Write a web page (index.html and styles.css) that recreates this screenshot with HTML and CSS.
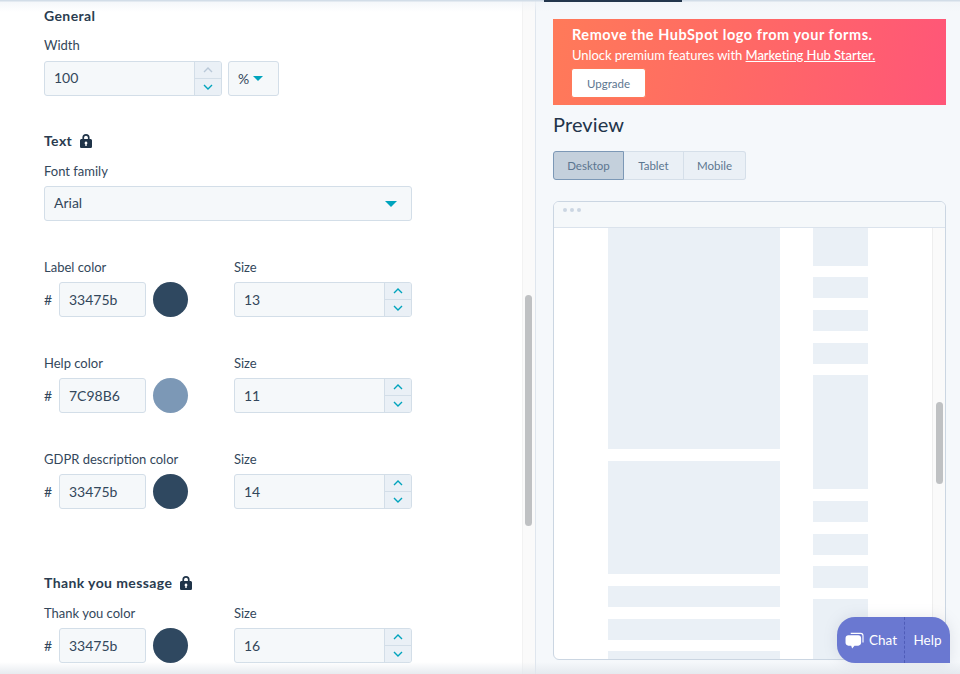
FILE: index.html
```html
<!DOCTYPE html>
<html lang="en">
<head>
  <meta charset="UTF-8" />
  <title>Form styling</title>
  <link rel="stylesheet" href="styles.css">
</head>
<body>

  <div class="page">

    <!-- settings column -->
    <div class="settings">
      <h3 class="heading">General</h3>
      <div class="label label-width">Width</div>
      <div class="row">
        <div class="field field-width">
          <span class="value value-up">100</span>
          <div class="stepper">
            <span class="step"><svg class="chev" viewBox="0 0 10 6"><path class="off" d="M1 5l4-4 4 4"/></svg></span>
            <span class="step"><svg class="chev" viewBox="0 0 10 6"><path d="M1 1l4 4 4-4"/></svg></span>
          </div>
        </div>
        <div class="field field-unit"><span class="unit">%</span><span class="caret caret-small"></span></div>
      </div>

      <h3 class="heading heading-text">Text
        <svg class="lock" viewBox="0 0 12 14"><path fill-rule="evenodd" d="M6 0a3.6 3.6 0 0 0-3.6 3.6V5H1.6C.7 5 0 5.7 0 6.6v5.8c0 .9.7 1.6 1.6 1.6h8.8c.9 0 1.6-.7 1.6-1.6V6.600c0-.9-.7-1.600-1.600-1.600H9.600V3.600A3.600 3.600 0 0 0 6 0zm0 1.700c1 0 1.900.8 1.900 1.900V5H4.100V3.600c0-1.100.9-1.900 1.900-1.900zM6 7.600a1.400 1.400 0 0 1 .7 2.600V12H5.300v-1.800A1.400 1.400 0 0 1 6 7.600z"/></svg>
      </h3>
      <div class="label">Font family</div>
      <div class="field field-select">
        <span class="value value-up">Arial</span><span class="caret"></span>
      </div>

      <div class="color-row">
        <div>
          <div class="label">Label color</div>
          <div class="row">
            <span class="hash">#</span>
            <div class="field field-hex"><span class="value">33475b</span></div>
            <span class="swatch swatch-dark"></span>
          </div>
        </div>
        <div>
          <div class="label">Size</div>
          <div class="field field-size">
            <span class="value">13</span>
            <div class="stepper">
              <span class="step"><svg class="chev" viewBox="0 0 10 6"><path d="M1 5l4-4 4 4"/></svg></span>
              <span class="step"><svg class="chev" viewBox="0 0 10 6"><path d="M1 1l4 4 4-4"/></svg></span>
            </div>
          </div>
        </div>
      </div>

      <div class="color-row">
        <div>
          <div class="label">Help color</div>
          <div class="row">
            <span class="hash">#</span>
            <div class="field field-hex"><span class="value">7C98B6</span></div>
            <span class="swatch swatch-light"></span>
          </div>
        </div>
        <div>
          <div class="label">Size</div>
          <div class="field field-size">
            <span class="value">11</span>
            <div class="stepper">
              <span class="step"><svg class="chev" viewBox="0 0 10 6"><path d="M1 5l4-4 4 4"/></svg></span>
              <span class="step"><svg class="chev" viewBox="0 0 10 6"><path d="M1 1l4 4 4-4"/></svg></span>
            </div>
          </div>
        </div>
      </div>

      <div class="color-row">
        <div>
          <div class="label">GDPR description color</div>
          <div class="row">
            <span class="hash">#</span>
            <div class="field field-hex"><span class="value">33475b</span></div>
            <span class="swatch swatch-dark"></span>
          </div>
        </div>
        <div>
          <div class="label">Size</div>
          <div class="field field-size">
            <span class="value">14</span>
            <div class="stepper">
              <span class="step"><svg class="chev" viewBox="0 0 10 6"><path d="M1 5l4-4 4 4"/></svg></span>
              <span class="step"><svg class="chev" viewBox="0 0 10 6"><path d="M1 1l4 4 4-4"/></svg></span>
            </div>
          </div>
        </div>
      </div>

      <h3 class="heading heading-thanks">Thank you message
        <svg class="lock" viewBox="0 0 12 14"><path fill-rule="evenodd" d="M6 0a3.6 3.6 0 0 0-3.6 3.6V5H1.6C.7 5 0 5.7 0 6.6v5.8c0 .9.7 1.6 1.6 1.6h8.8c.9 0 1.6-.7 1.6-1.6V6.600c0-.9-.7-1.600-1.600-1.600H9.600V3.600A3.600 3.600 0 0 0 6 0zm0 1.700c1 0 1.900.8 1.900 1.900V5H4.100V3.600c0-1.100.9-1.900 1.900-1.900zM6 7.600a1.400 1.400 0 0 1 .7 2.600V12H5.300v-1.800A1.400 1.400 0 0 1 6 7.600z"/></svg>
      </h3>
      <div class="color-row color-thanks">
        <div>
          <div class="label">Thank you color</div>
          <div class="row">
            <span class="hash">#</span>
            <div class="field field-hex"><span class="value">33475b</span></div>
            <span class="swatch swatch-dark"></span>
          </div>
        </div>
        <div>
          <div class="label">Size</div>
          <div class="field field-size">
            <span class="value">16</span>
            <div class="stepper">
              <span class="step"><svg class="chev" viewBox="0 0 10 6"><path d="M1 5l4-4 4 4"/></svg></span>
              <span class="step"><svg class="chev" viewBox="0 0 10 6"><path d="M1 1l4 4 4-4"/></svg></span>
            </div>
          </div>
        </div>
      </div>
    </div>

    <div class="track track-main"><span class="thumb thumb-main"></span></div>

    <!-- preview column -->
    <div class="side">
      <div class="active-tab"></div>

      <div class="banner">
        <div class="banner-title">Remove the HubSpot logo from your forms.</div>
        <div class="banner-text">Unlock premium features with <a href="#">Marketing Hub Starter.</a></div>
        <button class="upgrade">Upgrade</button>
      </div>

      <h2 class="preview-title">Preview</h2>

      <div class="devices">
        <button class="device device-on">Desktop</button>
        <button class="device device-tablet">Tablet</button>
        <button class="device device-mobile">Mobile</button>
      </div>

      <div class="frame">
        <div class="frame-bar"><i></i><i></i><i></i></div>
        <div class="frame-body">
          <div class="col col-main">
            <div class="ph ph-xl"></div>
            <div class="ph ph-lg"></div>
            <div class="ph"></div>
            <div class="ph"></div>
            <div class="ph"></div>
          </div>
          <div class="col col-side">
            <div class="ph ph-top"></div>
            <div class="ph"></div>
            <div class="ph"></div>
            <div class="ph"></div>
            <div class="ph ph-lg"></div>
            <div class="ph"></div>
            <div class="ph"></div>
            <div class="ph"></div>
            <div class="ph ph-lg"></div>
          </div>
          <div class="track track-frame"><span class="thumb thumb-frame"></span></div>
        </div>
      </div>
    </div>

  </div>

  <div class="fade-top"></div>
  <div class="fade-bottom"></div>

  <div class="chat">
    <span class="chat-part chat-left">
      <svg class="chat-icon" viewBox="0 0 20 18"><path class="back" d="M6 1.500h10.500c1.400 0 2.500 1.100 2.500 2.500v7"/><path d="M3.500 3.500h10.500c1.700 0 3 1.300 3 3v5c0 1.700-1.300 3-3 3H10l-2.500 3-1-3h-3c-1.700 0-3-1.300-3-3v-5c0-1.700 1.300-3 3-3z"/></svg>
      Chat
    </span>
    <span class="chat-part chat-right">Help</span>
  </div>

</body>
</html>
```

FILE: styles.css
```css
* { box-sizing: border-box; }
body { margin: 0; height: 674px; overflow: hidden; font-family: Lato, "Open Sans", sans-serif; color: #33475b; background: #fff; position: relative; }
button { font-family: inherit; cursor: pointer; }

.page { display: flex; height: 674px; }

/* settings column */
.settings { width: 522px; padding: 6px 0 0 44px; overflow: hidden; }
.heading { margin: 0 0 11px; height: 20px; font-size: 14px; line-height: 20px; font-weight: 700; letter-spacing: .4px; color: #2a3c50; display: flex; align-items: center; gap: 8px; }
.heading-text { margin-top: 35px; }
.heading-thanks { margin-top: 64px; }
.lock { width: 12px; height: 14px; fill: #1f3348; }
.label { height: 18px; margin-bottom: 6px; font-size: 13px; line-height: 18px; color: #33475b; }
.label-width { margin-top: -1px; margin-bottom: 7px; }
.row { display: flex; align-items: center; }

.field { height: 35px; display: flex; align-items: center; background: #f5f8fa; border: 1px solid #d3dee8; border-radius: 3px; font-size: 14px; color: #33475b; position: relative; }
.value { padding-left: 9px; }
.value-up { padding-bottom: 2px; }
.field-width { width: 178px; margin-right: 6px; }
.field-unit { width: 51px; padding-left: 9px; gap: 4px; }
.unit { font-size: 14px; }
.field-select { width: 368px; padding-right: 14px; justify-content: space-between; }
.field-hex { width: 87px; }
.field-size { width: 178px; }
.caret { width: 0; height: 0; border-left: 6px solid transparent; border-right: 6px solid transparent; border-top: 6px solid #00a4bd; }
.caret-small { border-left-width: 5.500px; border-right-width: 5.500px; border-top-width: 5px; }

.stepper { position: absolute; top: 0; right: 0; bottom: 0; width: 27px; display: flex; flex-direction: column; background: #eaf0f6; border-left: 1px solid #d3dee8; border-radius: 0 2px 2px 0; }
.step { flex: 1; display: flex; align-items: center; justify-content: center; }
.step + .step { border-top: 1px solid #d3dee8; }
.chev { width: 10px; height: 6px; fill: none; stroke: #00a4bd; stroke-width: 1.400; }
.chev .off { stroke: #b9c8d8; }

.color-row { display: flex; gap: 46px; margin-top: 37px; }
.color-thanks { margin-top: 11px; }
.color-row > div:first-child { width: 144px; }
.hash { width: 15px; font-size: 14px; }
.swatch { width: 35px; height: 35px; margin-left: 7px; border-radius: 50%; }
.swatch-dark { background: #2f4860; }
.swatch-light { background: #7c98b6; }

/* scrollbars */
.track { background: #fafafa; display: block; }
.track-main { width: 14px; padding: 295px 0 0 2px; border-left: 1px solid #f2f2f2; border-right: 1px solid #dfe6ee; }
.thumb { display: block; width: 7px; background: #bfc1c3; border-radius: 4px; }
.thumb-main { height: 231px; }

/* preview column */
.side { flex: 1; background: #f5f8fb; padding-left: 17px; }
.active-tab { width: 138px; height: 2px; margin-left: -9px; background: #22364c; position: relative; z-index: 1; }

.banner { width: 393px; height: 86px; margin-top: 17px; padding: 6px 0 0 19px; color: #fff; background: linear-gradient(100deg, #ff7a59 0%, #ff6a64 45%, #ff5678 100%); }
.banner-title { height: 20px; font-size: 14.500px; line-height: 20px; font-weight: 700; letter-spacing: .53px; }
.banner-text { height: 20px; font-size: 13px; line-height: 20px; letter-spacing: -.05px; }
.banner-text a { color: #fff; font-weight: 500; }
.upgrade { display: block; width: 75px; height: 30px; margin: 3px 0 0 -1px; background: #fff; border: 1px solid #ff7a59; border-radius: 3px; font-size: 11.500px; color: #5c7690; padding: 0; }

.preview-title { margin: 4px 0 12px; height: 30px; font-size: 20px; line-height: 30px; font-weight: 400; letter-spacing: .1px; color: #22344a; }

.devices { display: flex; width: 193px; height: 29px; }
.device { height: 29px; padding: 0; font-size: 11.500px; color: #5c7690; background: #eaf0f6; border: 1px solid #d5dfe9; border-left: 0; }
.device-on { width: 71px; background: #c4d0dc; border: 1px solid #7c98b6; border-radius: 3px 0 0 3px; }
.device-tablet { width: 60px; }
.device-mobile { width: 62px; border-radius: 0 3px 3px 0; }

.frame { width: 393px; height: 459px; margin-top: 21px; background: #fff; border: 1px solid #cbd6e2; border-radius: 6px; overflow: hidden; display: flex; flex-direction: column; }
.frame-bar { height: 26px; flex: none; display: flex; gap: 3px; padding: 6px 0 0 9px; background: #f5f8fa; border-bottom: 1px solid #dbe3ec; }
.frame-bar i { width: 4px; height: 4px; border-radius: 50%; background: #cbd6e2; }
.frame-body { flex: 1; display: flex; overflow: hidden; }
.col { display: flex; flex-direction: column; gap: 11.500px; flex: none; }
.col-main { width: 172px; margin-left: 54px; }
.col-side { width: 55px; margin-left: 33px; }
.ph { height: 21.330px; flex: none; background: #eaf0f6; }
.ph-xl { height: 221px; }
.ph-lg { height: 113.700px; }
.ph-top { height: 37.500px; }
.track-frame { width: 13px; margin-left: auto; padding: 174px 0 0 3px; border-left: 1px solid #eee; flex: none; }
.thumb-frame { height: 82px; }

/* page edges */
.fade-top { position: absolute; left: 0; right: 0; top: 0; height: 12px; background: linear-gradient(#d2dde8 0, #d2dde8 1px, rgba(240,244,248,.7) 2px, rgba(255,255,255,0) 100%); }
.fade-bottom { position: absolute; left: 0; right: 0; bottom: 0; height: 12px; background: linear-gradient(rgba(225,230,236,0), rgba(225,230,236,.8)); }

/* chat widget */
.chat { position: absolute; left: 837px; top: 617px; width: 113px; height: 46px; display: flex; color: #fff; font-size: 13.500px; background: #6a78d1; border-radius: 18px 18px 0 18px; box-shadow: 0 0 14px rgba(120,130,150,.18); }
.chat-part { display: flex; align-items: center; height: 100%; }
.chat-left { width: 68px; padding-left: 8px; gap: 5px; border-right: 1px dashed #4f5cb8; }
.chat-right { flex: 1; justify-content: center; }
.chat-icon { width: 19px; height: 17px; fill: #fff; }
.chat-icon .back { fill: none; stroke: #fff; stroke-width: 1.200; }
```
